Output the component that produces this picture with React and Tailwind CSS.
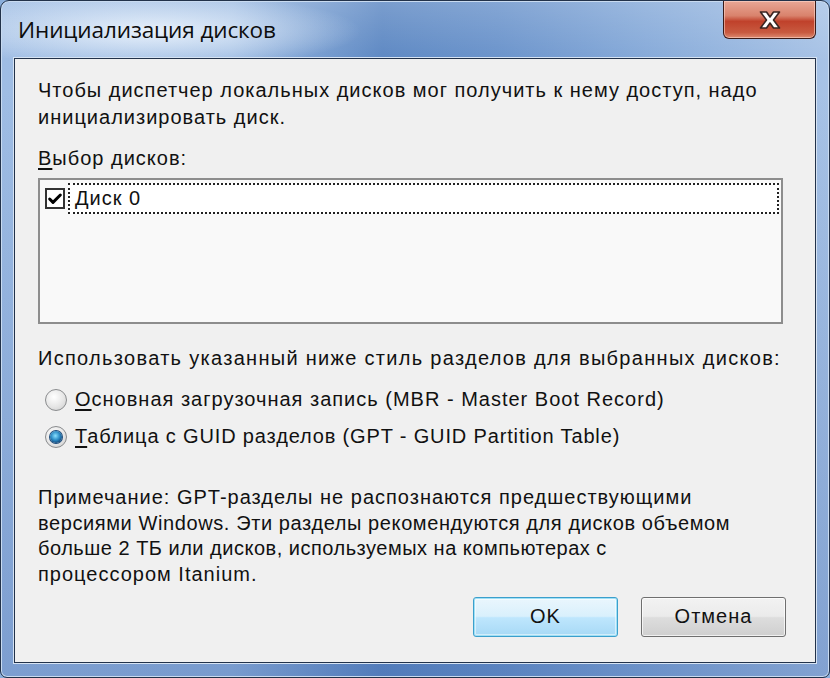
import { Check } from "lucide-react";

const body = { fontFamily: '"Liberation Sans", Arial, sans-serif' };

function Radio({ checked }) {
  return (
    <span className="w-[22px] h-[22px] rounded-full border border-[#8a8c8e] bg-[radial-gradient(circle_at_40%_35%,#ffffff,#e6e6e6_55%,#c9c9c9)] flex items-center justify-center shrink-0">
      {checked && (
        <span className="w-[12px] h-[12px] rounded-full bg-[radial-gradient(circle_at_45%_40%,#8ae0ff,#2a8ac4_45%,#0e3c6e_80%)] shadow-[0_0_0_1px_#1b4a7a]" />
      )}
    </span>
  );
}

export default function App() {
  return (
    <div className="w-[830px] h-[678px] bg-[#8aaedb] overflow-hidden" style={body}>
      <div className="w-full h-full rounded-t-[9px] rounded-b-[7px] border border-[#22324a] bg-[radial-gradient(ellipse_210px_38px_at_150px_30px,rgba(235,243,252,0.95),rgba(235,243,252,0)),linear-gradient(180deg,rgba(255,255,255,0.18),rgba(255,255,255,0)_60px,rgba(60,100,170,0)_90px,rgba(60,100,170,0.35)_100%),linear-gradient(90deg,#9fbde4_0%,#98b8e1_28%,#5d88c3_46%,#6a93cb_60%,#86aad9_78%,#a8c3e6_100%)] flex flex-col px-[13px] pb-[14px] shadow-[inset_0_0_0_1px_#c9dbf0]">
        <div className="h-[57px] flex items-start justify-between shrink-0">
          <div
            className="pl-[4px] pt-[12px] text-[22.5px] text-[#0d0d0d] tracking-[-0.1px]"
            style={{ fontFamily: '"Open Sans", "Noto Sans", sans-serif' }}
          >
            Инициализация дисков
          </div>
          <div className="w-[93px] h-[38px] rounded-b-[6px] border border-t-0 border-[#3b1b18] bg-[linear-gradient(180deg,#e9a796_0%,#d9826c_40%,#c0412b_55%,#c85a40_85%,#dd8a70_100%)] shadow-[inset_0_0_0_1px_rgba(255,220,210,0.55)] flex items-center justify-center">
            <svg width="28" height="22" viewBox="0 0 28 22">
              <path
                d="M4.5 3 L10.5 3 L14 8 L17.5 3 L23.5 3 L17.5 11 L23.5 19 L17.5 19 L14 14 L10.5 19 L4.5 19 L10.5 11 Z"
                fill="#ffffff"
                stroke="#3a2420"
                strokeWidth="1.6"
                strokeLinejoin="round"
              />
            </svg>
          </div>
        </div>

        <div className="flex-1 border border-[#22324a] shadow-[0_0_0_1px_#d6e3f3] bg-[#f0f0f0] flex flex-col pl-[23px] pr-[29px] pt-[18px] text-[20px] tracking-[1px] leading-[27px] text-[#111]">
          <p>
            Чтобы диспетчер локальных дисков мог получить к нему доступ, надо
            <br />
            инициализировать диск.
          </p>

          <p className="mt-[14px]">
            <span className="underline underline-offset-[3px]">В</span>ыбор дисков:
          </p>

          <div className="mt-[6px] mr-[3px] h-[146px] border-2 border-[#8d8d8d] bg-[#f9f9f9] pt-[3px] pr-[2px] pl-[5px]">
            <div className="flex items-center gap-[3px] h-[31px]">
              <span className="w-[20px] h-[21px] border-2 border-[#333] bg-white flex items-center justify-center shrink-0">
                <Check size={18} strokeWidth={4.5} color="#000" />
              </span>
              <div className="flex-1 h-full bg-white border-2 border-dotted border-[#222] flex items-center pl-[5px]">
                Диск 0
              </div>
            </div>
          </div>

          <p className="mt-[21px] whitespace-nowrap tracking-[1.3px]">Использовать указанный ниже стиль разделов для выбранных дисков:</p>

          <div className="mt-[14px] flex flex-col gap-[10px] pl-[7px]">
            <label className="flex items-center gap-[8px] h-[27px]">
              <Radio />
              <span>
                <span className="underline underline-offset-[3px]">О</span>сновная загрузочная запись (MBR - Master Boot Record)
              </span>
            </label>
            <label className="flex items-center gap-[8px] h-[27px]">
              <Radio checked />
              <span className="tracking-[0.85px]">
                <span className="underline underline-offset-[3px]">Т</span>аблица с GUID разделов (GPT - GUID Partition Table)
              </span>
            </label>
          </div>

          <div className="mt-[35px] leading-[25.7px] whitespace-nowrap flex flex-col">
            <span>Примечание: GPT-разделы не распознаются предшествующими</span>
            <span className="tracking-[0.6px]">версиями Windows. Эти разделы рекомендуются для дисков объемом</span>
            <span className="tracking-[0.5px]">больше 2 ТБ или дисков, используемых на компьютерах с</span>
            <span>процессором Itanium.</span>
          </div>

          <div className="mt-[9px] flex justify-end gap-[23px]">
            <button className="w-[145px] h-[40px] rounded-[3px] border border-[#3c9fcc] bg-[linear-gradient(180deg,#eaf6fd_0%,#d9f0fc_48%,#bee6fd_52%,#a7d9f5_100%)] shadow-[inset_0_0_0_1px_#9fe0f6,inset_0_0_0_2px_rgba(255,255,255,0.5)] text-[20px] tracking-[1px] text-[#111]">
              OK
            </button>
            <button className="w-[145px] h-[40px] rounded-[3px] border border-[#6f6f6f] bg-[linear-gradient(180deg,#f2f2f2_0%,#ebebeb_48%,#dddddd_52%,#cfcfcf_100%)] shadow-[inset_0_0_0_1px_rgba(255,255,255,0.7)] text-[20px] tracking-[1px] text-[#111]">
              Отмена
            </button>
          </div>
        </div>
      </div>
    </div>
  );
}
